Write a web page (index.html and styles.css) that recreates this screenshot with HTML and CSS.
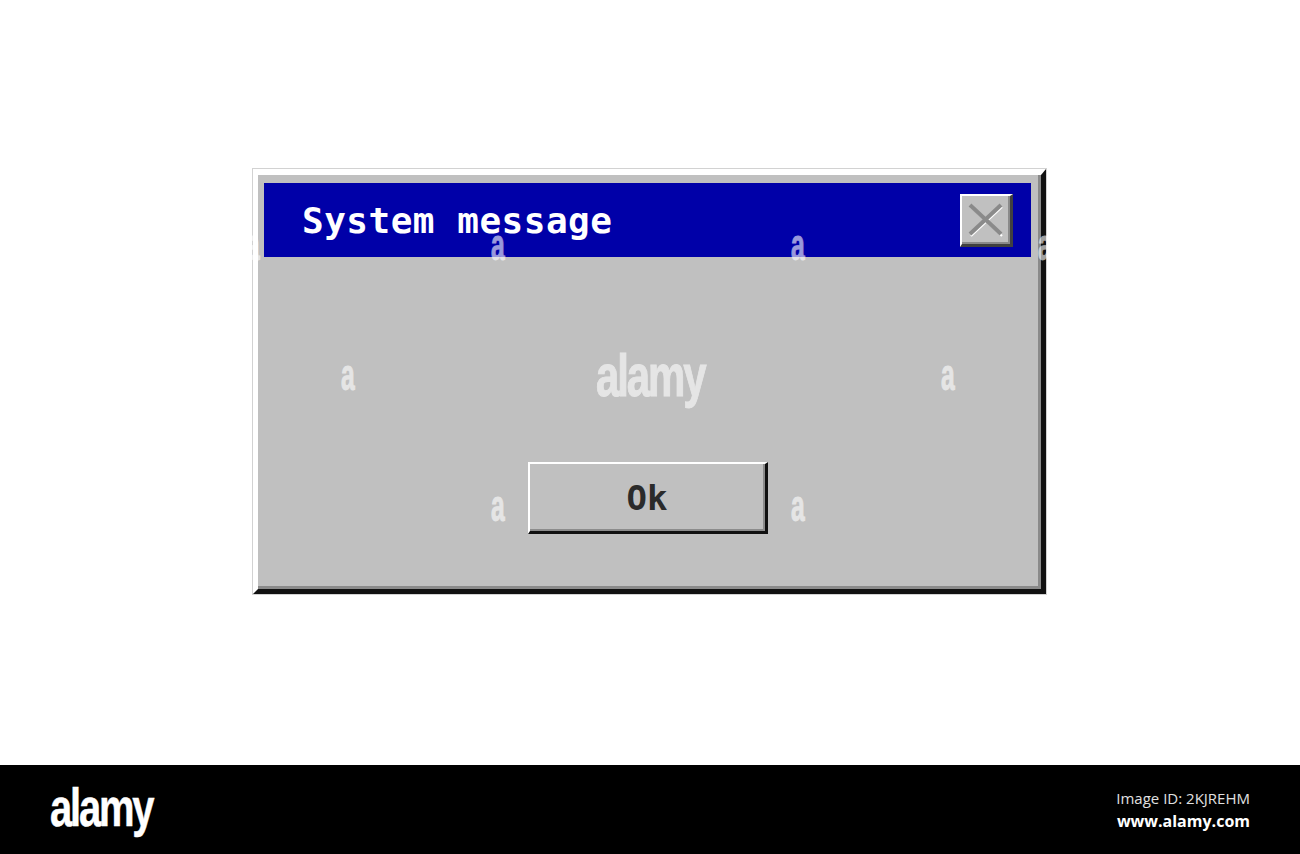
FILE: index.html
```html
<!DOCTYPE html>
<html lang="en">
<head>
    <meta charset="UTF-8">
    <meta name="viewport" content="width=device-width, initial-scale=1.0">
    <title>System message</title>
    <link rel="stylesheet" href="styles.css">
</head>
<body>
    <div class="stage">
        <div class="frame">
            <div class="window">
                <div class="titlebar">
                    <span class="title">System message</span>
                    <button class="close" aria-label="Close">
                        <svg width="36" height="34" viewBox="0 0 36 34">
                            <g stroke="#ffffff" stroke-width="2">
                                <line x1="3" y1="4" x2="34" y2="33"/>
                                <line x1="34" y1="4" x2="3" y2="33"/>
                            </g>
                            <g stroke="#8a8a8a" stroke-width="4">
                                <line x1="2" y1="2" x2="33" y2="31"/>
                                <line x1="33" y1="2" x2="2" y2="31"/>
                            </g>
                        </svg>
                    </button>
                </div>
                <div class="content">
                    <button class="ok">Ok</button>
                </div>
            </div>
        </div>

        <!-- stock watermark -->
        <span class="wm wm-logo">alamy</span>
        <span class="wm wm-a wm-1">a</span>
        <span class="wm wm-a wm-2">a</span>
        <span class="wm wm-a wm-3">a</span>
        <span class="wm wm-a wm-4">a</span>
        <span class="wm wm-a wm-5">a</span>
        <span class="wm wm-a wm-6">a</span>
        <span class="wm wm-a wm-7">a</span>
        <span class="wm wm-a wm-8">a</span>
    </div>

    <footer class="footer">
        <span class="brand">alamy</span>
        <div class="credit">
            <div class="img-id">Image ID: 2KJREHM</div>
            <div class="site">www.alamy.com</div>
        </div>
    </footer>
</body>
</html>
```

FILE: styles.css
```css
body {
    margin: 0;
    background-color: #fff;
    overflow: hidden;
}
.stage {
    position: relative;
    height: 765px;
    padding: 168px 0 0 252px;
    box-sizing: border-box;
}
.frame {
    display: inline-block;
    border: 1px solid #d2d2d2;
}
.window {
    background-color: #c0c0c0;
    border-style: solid;
    border-width: 6px 5px 5px 5px;
    border-color: #fff #111 #111 #fff;
    padding: 8px 10px 55px 6px;
    box-shadow: inset -3px -3px 0 #8a8a8a;
}
.titlebar {
    display: flex;
    align-items: center;
    justify-content: space-between;
    width: 767px;
    height: 74px;
    padding: 0 18px 0 38px;
    box-sizing: border-box;
    background-color: #0000a8;
}
.title {
    font-family: "DejaVu Sans Mono", monospace;
    font-weight: bold;
    font-size: 36px;
    letter-spacing: 0.5px;
    color: #fff;
}
.close {
    display: flex;
    align-items: center;
    justify-content: center;
    width: 53px;
    height: 53px;
    padding: 0;
    box-sizing: border-box;
    background-color: #c0c0c0;
    border-style: solid;
    border-width: 2px 3px 3px 2px;
    border-color: #fff #404040 #404040 #fff;
    box-shadow: inset -2px -2px 0 #8a8a8a;
}
.content {
    display: flex;
    justify-content: center;
    padding-top: 205px;
}
.ok {
    width: 240px;
    height: 72px;
    box-sizing: border-box;
    background-color: #c0c0c0;
    border-style: solid;
    border-width: 2px 3px 3px 2px;
    border-color: #fff #111 #111 #fff;
    box-shadow: inset -2px -2px 0 #8c8c8c;
    font-family: "DejaVu Sans Mono", monospace;
    font-weight: bold;
    font-size: 34px;
    color: #2b2b2b;
}

/* watermark */
.wm {
    position: absolute;
    font-family: "Liberation Sans", Arial, sans-serif;
    font-weight: bold;
    line-height: 1;
    color: #fff;
    -webkit-text-stroke: 1px #fff;
    opacity: 0.6;
    transform-origin: 0 0;
}
.wm-logo {
    left: 596px;
    top: 346px;
    font-size: 60px;
    letter-spacing: -3px;
    transform: scaleX(0.7);
}
.wm-a {
    font-size: 44px;
    transform: scaleX(0.56);
}
.wm-1 { left: 341px; top: 353px; }
.wm-2 { left: 941px; top: 353px; }
.wm-3 { left: 491px; top: 223px; }
.wm-4 { left: 791px; top: 223px; }
.wm-5 { left: 491px; top: 484px; }
.wm-6 { left: 791px; top: 484px; }
.wm-7 { left: 246px; top: 223px; }
.wm-8 { left: 1038px; top: 223px; }

.footer {
    display: flex;
    align-items: center;
    justify-content: space-between;
    height: 89px;
    padding: 0 50px;
    box-sizing: border-box;
    background-color: #000;
}
.brand {
    display: inline-block;
    margin-bottom: 6px;
    font-family: "Liberation Sans", Arial, sans-serif;
    font-weight: bold;
    font-size: 54px;
    line-height: 1;
    letter-spacing: -3px;
    color: #fff;
    -webkit-text-stroke: 0.5px #fff;
    transform: scaleX(0.74);
    transform-origin: 0 50%;
}
.credit {
    text-align: right;
    font-family: "Open Sans", sans-serif;
    color: #fff;
}
.img-id {
    font-size: 15px;
    line-height: 22px;
    color: #e0e0e0;
}
.site {
    font-size: 16px;
    font-weight: bold;
    line-height: 24px;
}
```
